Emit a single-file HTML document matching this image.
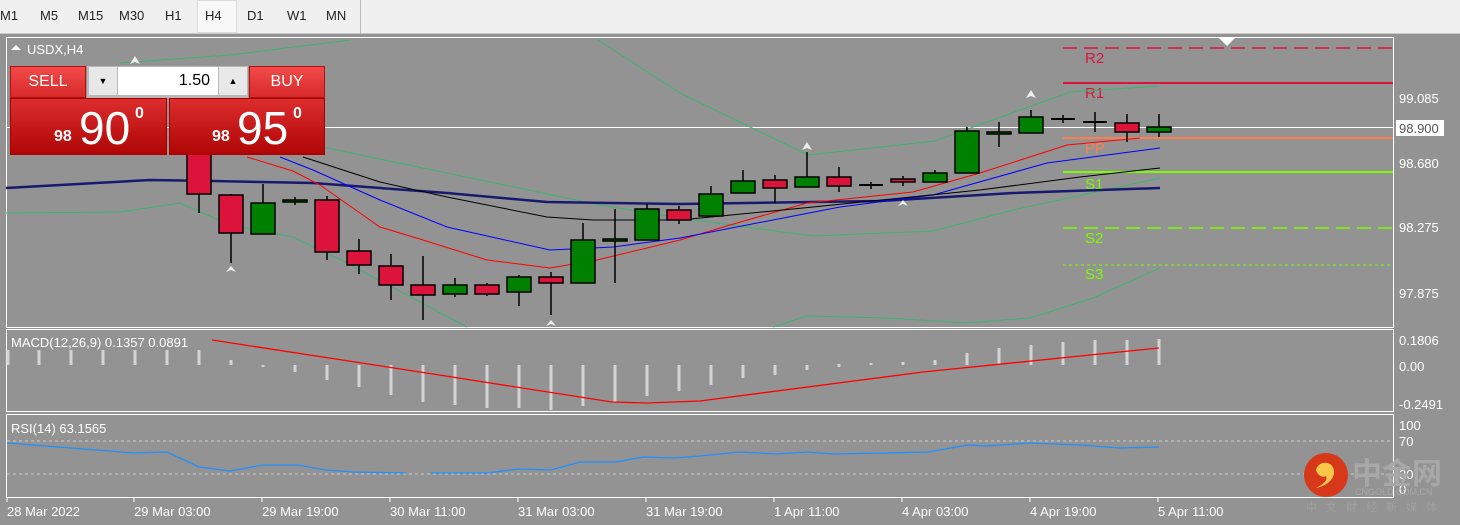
<!DOCTYPE html>
<html><head><meta charset="utf-8"><style>
*{margin:0;padding:0;box-sizing:border-box}
body{width:1460px;height:525px;overflow:hidden;background:#939393;font-family:"Liberation Sans",sans-serif;position:relative}
.tb{position:absolute;left:0;top:0;width:1460px;height:34px;background:#f0f0f0;border-bottom:1px solid #c8c8c8}
.tb span{position:absolute;top:8px;font-size:13px;color:#222}
.sel{position:absolute;left:197px;top:0;width:40px;height:33px;background:#f8f8f8;border:1px solid #dcdcdc}
.sep{position:absolute;left:360px;top:0;width:1px;height:34px;background:#bbb}
.tp{position:absolute;font-family:"Liberation Sans",sans-serif;color:#fff}
.btn{background:linear-gradient(#f24a4a,#d82a2a);border:1px solid #b01010;font-size:16px;text-align:center;line-height:30px}
.big{background:linear-gradient(#dc2d2d,#b00606);border:1px solid #a00}
</style></head><body>
<div class="tb">
<div class="sel"></div>
<span style="left:0">M1</span><span style="left:40px">M5</span><span style="left:78px">M15</span><span style="left:119px">M30</span><span style="left:165px">H1</span><span style="left:205px">H4</span><span style="left:247px">D1</span><span style="left:287px">W1</span><span style="left:326px">MN</span>
<div class="sep"></div>
</div>
<svg style="position:absolute;left:0;top:0" width="1460" height="525" xmlns="http://www.w3.org/2000/svg" font-family="Liberation Sans, sans-serif">
<g fill="none" stroke="#fff" stroke-width="1">
<rect x="6.5" y="37.5" width="1387" height="290"/>
<rect x="6.5" y="329.5" width="1387" height="82"/>
<rect x="6.5" y="414.5" width="1387" height="83"/>
</g>
<!-- axis ticks -->
<g fill="#fff" font-size="13">
<text x="1399" y="103">99.085</text>
<rect x="1396" y="120" width="48" height="16" fill="#fff"/>
<text x="1399" y="133" fill="#555">98.900</text>
<text x="1399" y="168">98.680</text>
<text x="1399" y="232">98.275</text>
<text x="1399" y="298">97.875</text>
<text x="1399" y="345">0.1806</text>
<text x="1399" y="371">0.00</text>
<text x="1399" y="409">-0.2491</text>
<text x="1399" y="430">100</text>
<text x="1399" y="446">70</text>
<text x="1399" y="479">30</text>
<text x="1399" y="494">0</text>
<text x="7" y="516">28 Mar 2022</text>
<text x="134" y="516">29 Mar 03:00</text>
<text x="262" y="516">29 Mar 19:00</text>
<text x="390" y="516">30 Mar 11:00</text>
<text x="518" y="516">31 Mar 03:00</text>
<text x="646" y="516">31 Mar 19:00</text>
<text x="774" y="516">1 Apr 11:00</text>
<text x="902" y="516">4 Apr 03:00</text>
<text x="1030" y="516">4 Apr 19:00</text>
<text x="1158" y="516">5 Apr 11:00</text>
<text x="27" y="54">USDX,H4</text>
<text x="11" y="347">MACD(12,26,9) 0.1357 0.0891</text>
<text x="11" y="433">RSI(14) 63.1565</text>
</g>
<path d="M11 50l5-5 5 5z" fill="#fff"/>
<path d="M1219 38h16l-8 8z" fill="#fff"/>
<g stroke="#fff"><path d="M7 498v4M134 498v4M262 498v4M390 498v4M518 498v4M646 498v4M774 498v4M902 498v4M1030 498v4M1158 498v4"/></g>
<!-- white price line -->
<path d="M7 127.5H1393" stroke="#fff"/>
<!-- pivots -->
<path d="M1063 48H1393" stroke="#dc143c" stroke-width="1.5" stroke-dasharray="14,7"/>
<path d="M1063 83H1393" stroke="#dc143c" stroke-width="2"/>
<path d="M1063 138H1393" stroke="#ff7f50" stroke-width="2"/>
<path d="M1063 172H1393" stroke="#7cfc00" stroke-width="2"/>
<path d="M1063 228H1393" stroke="#7cfc00" stroke-width="1.5" stroke-dasharray="14,7"/>
<path d="M1063 265H1393" stroke="#7cfc00" stroke-width="1" stroke-dasharray="3,3"/>
<g font-size="15">
<text x="1085" y="63" fill="#dc143c">R2</text>
<text x="1085" y="98" fill="#dc143c">R1</text>
<text x="1085" y="153" fill="#ff7f50">PP</text>
<text x="1085" y="189" fill="#7cfc00">S1</text>
<text x="1085" y="243" fill="#7cfc00">S2</text>
<text x="1085" y="279" fill="#7cfc00">S3</text>
</g>
<!-- bollinger -->
<g fill="none" stroke="#3cb371" stroke-width="1">
<path d="M120 63L230 55L350 40M598 40L680 93L750 127L808 155L935 141L965 130L1070 92L1159 86"/>
<path d="M180 140L327 148L600 205L680 218L813 236L933 231L1013 210L1160 178"/>
<path d="M6 213L120 212L180 203L230 225L293 237L347 263L467 327M773 327L807 316L887 318L967 323L1030 318L1093 298L1160 268"/>
</g>
<path d="M6 188L150 180L213 181L313 183L447 193L547 202L680 204L880 201L1013 193L1160 188" fill="none" stroke="#191970" stroke-width="2.5"/>
<path d="M247 157L293 171L320 185L380 227L423 240L487 260L550 268L597 260L680 240L730 225L807 203L913 192L980 173L1067 145L1140 138" fill="none" stroke="#f00"/>
<path d="M280 157L313 170L380 200L447 227L550 250L613 247L680 238L840 207L933 195L1047 163L1160 148" fill="none" stroke="#00f"/>
<path d="M303 157L380 182L447 197L547 217L593 220L680 220L813 207L980 190L1080 177L1160 168" fill="none" stroke="#000"/>
<!-- candles -->
<g stroke="#000" stroke-width="1.5">
<path d="M199 194v19M231 194v69M263 184v20M295 197v8M327 196v64M359 239v35M391 254v46M423 256v64M455 278v19M487 283v13M519 275v31M551 272v43M583 223v17M615 209v74M647 204v5M679 206v18M711 186v8M743 170v11M775 175v28M807 152v25M839 167v25M871 182v7M903 176v10M935 170v3M967 127v4M999 122v25M1031 110v7M1063 115v8M1095 112v20M1127 114v28M1159 114v23"/>
<g fill="#dc143c">
<rect x="187" y="150" width="24" height="44"/><rect x="219" y="195" width="24" height="38"/><rect x="315" y="200" width="24" height="52"/><rect x="347" y="251" width="24" height="14"/><rect x="379" y="266" width="24" height="19"/><rect x="411" y="285" width="24" height="10"/><rect x="475" y="285" width="24" height="9"/><rect x="539" y="277" width="24" height="6"/><rect x="667" y="210" width="24" height="10"/><rect x="763" y="180" width="24" height="8"/><rect x="827" y="177" width="24" height="9"/><rect x="891" y="179" width="24" height="3"/><rect x="1115" y="123" width="24" height="9"/>
</g>
<g fill="#008000">
<rect x="251" y="203" width="24" height="31"/><rect x="283" y="200" width="24" height="2"/><rect x="443" y="285" width="24" height="9"/><rect x="507" y="277" width="24" height="15"/><rect x="571" y="240" width="24" height="43"/><rect x="603" y="239" width="24" height="2"/><rect x="635" y="209" width="24" height="31"/><rect x="699" y="194" width="24" height="22"/><rect x="731" y="181" width="24" height="12"/><rect x="795" y="177" width="24" height="10"/><rect x="923" y="173" width="24" height="9"/><rect x="955" y="131" width="24" height="42"/><rect x="987" y="132" width="24" height="2"/><rect x="1019" y="117" width="24" height="16"/><rect x="1147" y="127" width="24" height="5"/>
</g>
<path d="M859 185h24M1051 119h24M1083 122h24" stroke-width="2"/>
</g>
<!-- arrows -->
<g fill="#eee"><path d="M226 272l5-6 5 6-5-2z"/><path d="M546 326l5-6 5 6-5-2z"/><path d="M898 206l5-6 5 6-5-2z"/><path d="M802 150l5 -8 5 8-5-2z"/><path d="M1026 98l5-8 5 8-5-2z"/><path d="M130 64l5-8 5 8-5-2z"/></g>
<!-- MACD -->
<g stroke="#d3d3d3" stroke-width="3">
<path d="M8 350v15M39 350v15M71 350v15M103 350v15M135 350v15M167 350v15M199 350v15M231 360v5M263 365v2M295 365v7M327 365v15M359 365v22M391 365v30M423 365v37M455 365v40M487 365v43M519 365v43M551 365v45M583 365v41M615 365v37M647 365v31M679 365v26M711 365v20M743 365v13M775 365v10M807 365v5M839 364v3M871 363v2M903 362v3M935 360v5M967 353v12M999 348v17M1031 345v20M1063 342v23M1095 340v25M1127 340v25M1159 339v26"/>
</g>
<path d="M212 340L420 372L612 402L647 403L700 401L923 372L1159 348" fill="none" stroke="#f00" stroke-width="1.3"/>
<!-- RSI -->
<g stroke="#ccc" stroke-dasharray="3,3"><path d="M7 441H1393M7 474H1393"/></g>
<path d="M7 443L134 453L167 452L199 467L230 471L263 465L297 465L326 470L353 472L406 473M431 473L487 473L518 469L551 470L580 462L616 462L643 457L674 458L700 456L740 452L776 454L807 452L834 454L887 453L928 452L968 445L986 446L1030 443L1079 445L1120 448L1159 447" fill="none" stroke="#1e90ff" stroke-width="1.3"/>
<!-- logo -->
<circle cx="1326" cy="475" r="22" fill="#d8381a"/>
<path d="M1316 470c2-10 18-10 18 2 0 8-8 14-18 16 8-4 12-8 10-12-3 2-8 0-10-6z" fill="#f7c748"/>
<text x="1352" y="484" font-size="30" font-weight="bold" fill="#a8a8a8" font-family="Liberation Sans, Noto Sans CJK SC, sans-serif">中金网</text>
<text x="1355" y="495" font-size="9" fill="#a8a8a8">CNGOLD.COM.CN</text>
<text x="1306" y="511" font-size="11" fill="#a0a0a0" letter-spacing="9" font-family="Noto Sans CJK SC, sans-serif">中文财经新媒体</text>
</svg>
<!-- trade panel -->
<div class="tp btn" style="left:10px;top:66px;width:76px;height:32px">SELL</div>
<div class="tp" style="left:87px;top:66px;width:161px;height:32px;background:#b8b8b8"></div>
<div class="tp" style="left:89px;top:67px;width:28px;height:28px;background:#e8e8e8;color:#000;text-align:center;font-size:9px;line-height:28px">▼</div>
<div class="tp" style="left:118px;top:67px;width:100px;height:28px;background:#fff;color:#000;text-align:right;padding-right:8px;font-size:16px;line-height:28px">1.50</div>
<div class="tp" style="left:219px;top:67px;width:28px;height:28px;background:#e8e8e8;color:#000;text-align:center;font-size:9px;line-height:28px">▲</div>
<div class="tp btn" style="left:249px;top:66px;width:76px;height:32px">BUY</div>
<div class="tp big" style="left:10px;top:98px;width:157px;height:57px"><span style="position:absolute;left:43px;top:29px;font-size:16px;font-weight:bold">98</span><span style="position:absolute;left:68px;top:2px;font-size:46px">90</span><span style="position:absolute;left:124px;top:6px;font-size:16px;font-weight:bold">0</span></div>
<div class="tp big" style="left:169px;top:98px;width:156px;height:57px"><span style="position:absolute;left:42px;top:29px;font-size:16px;font-weight:bold">98</span><span style="position:absolute;left:67px;top:2px;font-size:46px">95</span><span style="position:absolute;left:123px;top:6px;font-size:16px;font-weight:bold">0</span></div>
</body></html>
